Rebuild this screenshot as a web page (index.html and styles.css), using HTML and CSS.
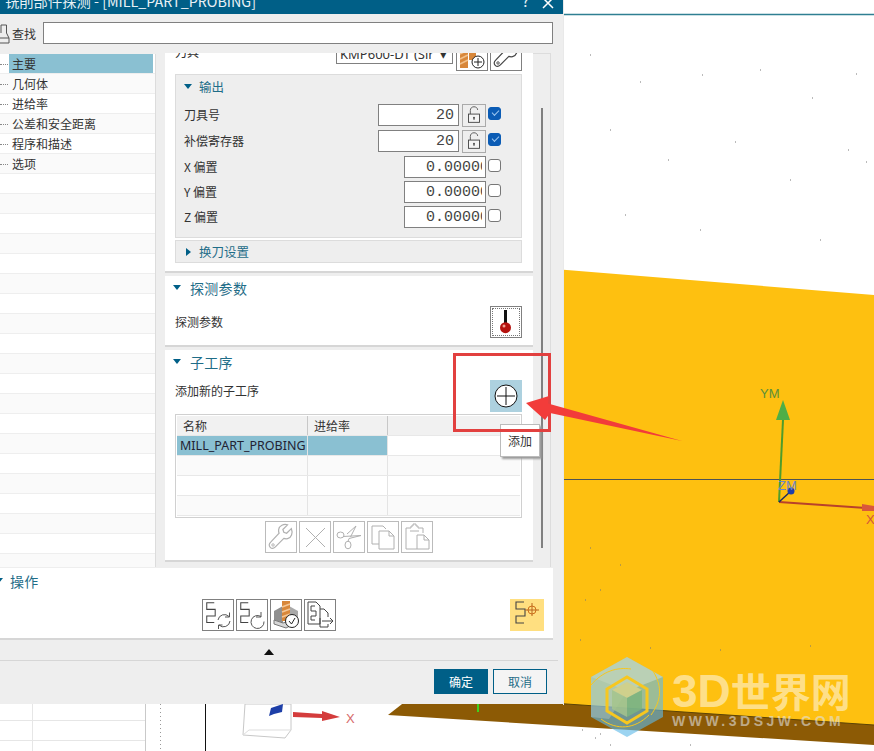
FILE: index.html
```html
<!DOCTYPE html>
<html lang="zh-CN">
<head>
  <meta charset="UTF-8" />
  <title>铣削部件探测</title>
  <link rel="stylesheet" href="styles.css">
</head>
<body>
  <svg class="hidden-defs" width="0" height="0">
    <symbol id="wrench" viewBox="0 0 32 32">
      <path d="M27 7l-5 5-3-1-1-3 5-5c-4-1.500-9 1-9.500 5-.2 1.500 0 3 .5 4L5 21.500c-2 2-2 4 -.5 5.500s3.500 1.500 5.500-.5L19 17.500c1 .4 2.500 .6 4 .3 4-.8 6-6 4-10.800z" fill="none" stroke="currentColor" stroke-width="1.300"/>
      <circle cx="7.500" cy="24.500" r="1.300" fill="none" stroke="currentColor"/>
    </symbol>
    <symbol id="lock" viewBox="0 0 24 24">
      <path d="M8 11V7c0-2.500 1.800-4 4-4s4 1.500 4 3.500" fill="none" stroke="#555" stroke-width="1"/>
      <rect x="6" y="11" width="12" height="9" fill="#f4f4f4" stroke="#444"/>
      <circle cx="12" cy="15" r="1" fill="#444"/>
      <path d="M12 15v2.500" stroke="#444"/>
    </symbol>
    <symbol id="seq" viewBox="0 0 32 32">
      <path d="M12 3H4V10H13V17H4V24H12" fill="none" stroke="#444" stroke-width="1.100"/>
    </symbol>
  </svg>

  <!-- 3D viewport behind the dialog -->
  <svg class="viewport" width="874" height="751" viewBox="0 0 874 751">
    <rect width="874" height="751" fill="#fff"/>
    <path d="M563 14.500H874" stroke="#2f7f92" stroke-width="1.500"/>
    <polygon points="388,715 420,690 874,700 874,745" fill="#8c5a05"/>
    <polygon points="430,259 874,295 874,725 420,694" fill="#fec010"/>
    <path d="M420 694L874 725" stroke="#5c4305" stroke-width="1"/>
    <path d="M563 479.500H874" stroke="#4e5355" stroke-width="1"/>
    <path d="M478 704v8" stroke="#3fd21f" stroke-width="2"/>
    <path d="M0 720.500H145M0 740.500H145M32.500 704V751" stroke="#e6e6e6"/>
    <path d="M145.500 704V751" stroke="#c9c9c9"/>
    <path d="M160.500 704V751" stroke="#999" stroke-dasharray="1 3"/>
    <path d="M205.500 704V751" stroke="#111"/>
    <polygon points="245,704 243,735 285,738 291,730 291,704" fill="none" stroke="#c8c8c8"/>
    <path d="M243 735L249 730H291" fill="none" stroke="#ddd"/>
    <path d="M269 716l2-8 12-4-1 8-8 2z" fill="#1e3fa8"/>
    <polygon points="293,712 322,714 322,711 340,717 322,721 322,718 293,717" fill="#d43c3c"/>
    <text class="axis-label" x="346" y="723" fill="#d66a6a">X</text>
    <path d="M779 502L783 420" stroke="#4f9c2c" stroke-width="2"/>
    <polygon points="783,400 790,420 776,420" fill="#4fae47"/>
    <text class="axis-label" x="760" y="398" fill="#5c8f3a">YM</text>
    <path d="M779 502L866 508" stroke="#b8412b" stroke-width="2"/>
    <polygon points="862,504 874,506 874,511 862,511" fill="#d9583c"/>
    <text class="axis-label" x="866" y="524" fill="#d4553a">X</text>
    <path d="M779 502L791 491" stroke="#1c2c60" stroke-width="1.500"/>
    <circle cx="791" cy="491" r="3.500" fill="#1e3fa8"/>
    <text class="axis-label" x="778" y="490" fill="#6f86c4">ZM</text>
    <path d="M590 55h1M640 82h1M702 75h1M760 70h1M812 98h1M856 74h1M610 130h1M668 160h1M735 142h1M790 180h1M848 150h1M866 162h1M700 230h1M625 215h1M820 240h1M580 640h1M650 648h1M720 650h1M810 646h1M582 730h1M595 738h1M600 734h1M690 745h1M610 745h1M585 600h1M600 590h1M620 565h1M590 548h1" stroke="#777"/>
    <path d="M563.500 0V705" stroke="#e9e9e9" stroke-width="1"/>
  </svg>

  <div class="dialog">
    <div class="title-bar">
      <span class="title-text">铣削部件探测 - [MILL_PART_PROBING]</span>
      <span class="title-help">?</span>
      <svg class="title-close" width="12" height="12" viewBox="0 0 12 12"><path d="M1 1L11 11M11 1L1 11" stroke="#fff" stroke-width="1.500"/></svg>
    </div>

    <div class="search-row">
      <svg class="search-icon" width="10" height="20" viewBox="0 0 10 20"><path d="M-1 19H9V14L6.500 9V1H1V9" fill="none" stroke="#555"/><path d="M-1 14H9" stroke="#555"/></svg>
      <span class="search-label">查找</span>
      <div class="search-input"></div>
    </div>

    <div class="main-row">
      <ul class="tree">
        <li class="tree-item active"><span class="tree-name">主要</span></li>
        <li class="tree-item"><span class="tree-name">几何体</span></li>
        <li class="tree-item"><span class="tree-name">进给率</span></li>
        <li class="tree-item"><span class="tree-name">公差和安全距离</span></li>
        <li class="tree-item"><span class="tree-name">程序和描述</span></li>
        <li class="tree-item"><span class="tree-name">选项</span></li>
      </ul>

      <div class="pane">
        <section class="panel panel-tool">
          <div class="tool-row">
            <span class="tool-label">刀具</span>
            <div class="tool-select">KMP600-DT (Sir&nbsp;&nbsp;▾</div>
            <button class="icon-btn">
              <svg width="30" height="30" viewBox="0 0 30 30">
                <rect x="3" y="8" width="8" height="20" fill="#d8873a"/>
                <path d="M3 14l8-4M3 19l8-4M3 24l8-4" stroke="#f2c08a" stroke-width="1.500"/>
                <rect x="12" y="8" width="7" height="12" fill="#d8873a"/>
                <circle cx="21" cy="22" r="6" fill="#fff" stroke="#222"/>
                <path d="M21 18v8M17 22h8" stroke="#222"/>
              </svg>
            </button>
            <button class="icon-btn"><svg class="wrench-dark" width="30" height="30"><use href="#wrench"/></svg></button>
          </div>

          <div class="group">
            <div class="group-head"><span class="tri-down"></span><span class="group-title">输出</span></div>
            <div class="field-row">
              <span class="field-label">刀具号</span>
              <div class="num-field wide"><span class="num-text">20</span></div>
              <button class="lock-btn"><svg width="22" height="22"><use href="#lock"/></svg></button>
              <span class="check on"></span>
            </div>
            <div class="field-row">
              <span class="field-label">补偿寄存器</span>
              <div class="num-field wide"><span class="num-text">20</span></div>
              <button class="lock-btn"><svg width="22" height="22"><use href="#lock"/></svg></button>
              <span class="check on"></span>
            </div>
            <div class="field-row">
              <span class="field-label">X 偏置</span>
              <div class="num-field"><span class="num-text clip">0.00000</span></div>
              <span class="check"></span>
            </div>
            <div class="field-row tight">
              <span class="field-label">Y 偏置</span>
              <div class="num-field"><span class="num-text clip">0.00000</span></div>
              <span class="check"></span>
            </div>
            <div class="field-row tight">
              <span class="field-label">Z 偏置</span>
              <div class="num-field"><span class="num-text clip">0.00000</span></div>
              <span class="check"></span>
            </div>
          </div>

          <div class="group group-closed">
            <span class="tri-right"></span><span class="group-title">换刀设置</span>
          </div>
        </section>

        <section class="panel panel-probe">
          <div class="panel-head"><span class="tri-down"></span><span class="panel-title">探测参数</span></div>
          <div class="action-row">
            <span class="action-label">探测参数</span>
            <button class="icon-btn probe-btn">
              <svg width="26" height="26" viewBox="0 0 26 26">
                <rect x="11" y="1" width="3" height="15" fill="#111"/>
                <circle cx="12.500" cy="18.700" r="5.500" fill="#b5120f"/>
                <circle cx="11" cy="17" r="1.500" fill="#f0a090"/>
              </svg>
            </button>
          </div>
        </section>

        <section class="panel panel-sub">
          <div class="panel-head"><span class="tri-down"></span><span class="panel-title">子工序</span></div>
          <div class="action-row add-row">
            <span class="action-label">添加新的子工序</span>
            <button class="add-btn">
              <svg width="24" height="24" viewBox="0 0 24 24"><circle cx="12" cy="12" r="11" fill="#fff" stroke="#111"/><path d="M12 3v18M3 12h18" stroke="#111"/></svg>
            </button>
          </div>
          <div class="sub-table">
            <div class="t-row t-head"><span class="t-cell">名称</span><span class="t-cell">进给率</span><span class="t-cell"></span></div>
            <div class="t-row t-sel"><span class="t-cell name">MILL_PART_PROBING</span><span class="t-cell"></span><span class="t-cell"></span></div>
            <div class="t-row t-alt"><span class="t-cell"></span><span class="t-cell"></span><span class="t-cell"></span></div>
            <div class="t-row"><span class="t-cell"></span><span class="t-cell"></span><span class="t-cell"></span></div>
            <div class="t-row t-alt"><span class="t-cell"></span><span class="t-cell"></span><span class="t-cell"></span></div>
          </div>
          <div class="gray-tools">
            <button class="gray-btn"><svg width="30" height="30"><use href="#wrench"/></svg></button>
            <button class="gray-btn"><svg width="30" height="30" viewBox="0 0 30 30"><path d="M6 6L25 25M25 6L6 25" stroke="currentColor"/></svg></button>
            <button class="gray-btn">
              <svg width="30" height="30" viewBox="0 0 30 30" fill="none" stroke="currentColor">
                <ellipse cx="6.500" cy="13" rx="3.500" ry="3"/><ellipse cx="14" cy="23" rx="3" ry="3.800"/>
                <path d="M9 14.500L27 13.500 15 16.500 14 19.500M13 12L22 4 16.500 15"/>
              </svg>
            </button>
            <button class="gray-btn">
              <svg width="30" height="30" viewBox="0 0 30 30" fill="none" stroke="currentColor">
                <path d="M11 22H4V4H15L18 7"/><path d="M11 9H21L26 14V27H11Z"/><path d="M21 9V14H26"/>
              </svg>
            </button>
            <button class="gray-btn">
              <svg width="30" height="30" viewBox="0 0 30 30" fill="none" stroke="currentColor">
                <path d="M15 27H4V6H9V4H11V2H14V4H16V6H21V11"/><path d="M15 13H22L27 18V27H15Z"/><path d="M22 13V18H27"/><path d="M8 9H17"/>
              </svg>
            </button>
          </div>
        </section>
      </div>

      <div class="scroll-gutter"><div class="scroll-thumb"></div></div>
    </div>

    <section class="ops">
      <div class="ops-head"><span class="tri-down cut"></span><span class="panel-title">操作</span></div>
      <div class="ops-row">
        <button class="icon-btn op-btn">
          <svg width="30" height="30" viewBox="0 0 30 30">
            <use href="#seq" width="30" height="30"/>
            <path d="M15 20a6.500 6.500 0 0 1 11-3.500M27 21a6.500 6.500 0 0 1-11 4M26.500 12.500v4.500h-4.500M15.500 29v-4h4" fill="none" stroke="#555"/>
          </svg>
        </button>
        <button class="icon-btn op-btn">
          <svg width="30" height="30" viewBox="0 0 30 30">
            <use href="#seq" width="30" height="30"/>
            <path d="M24 16.500a6.500 6.500 0 1 0 3 5M24 12v5h-5" fill="none" stroke="#555"/>
          </svg>
        </button>
        <button class="icon-btn op-btn">
          <svg width="30" height="30" viewBox="0 0 30 30">
            <path d="M3 11L12 6V23L3 20Z" fill="#8f8f8f"/><path d="M18 6L27 11V18L18 23Z" fill="#a9a9a9"/>
            <path d="M3 20L12 23 22 20 27 22 15 28 3 24Z" fill="#d6d6d6" stroke="#777"/>
            <rect x="11" y="1" width="8" height="20" fill="#d8873a"/>
            <path d="M11 7l8-3M11 12l8-3M11 17l8-3" stroke="#f4c797" stroke-width="1.500"/>
            <circle cx="21" cy="21" r="6.500" fill="#fff" stroke="#222"/>
            <path d="M18 21l2.500 3 3.500-6" fill="none" stroke="#222"/>
          </svg>
        </button>
        <button class="icon-btn op-btn">
          <svg width="30" height="30" viewBox="0 0 30 30" fill="none" stroke="#444">
            <path d="M3 2H11L15 6V24H3Z"/><path d="M10 6H6V11H11V16H6V20H10"/><path d="M15 9H19L23 13V17M23 24V27H15V18"/><path d="M17 21H28M25 18L28 21 25 24"/>
          </svg>
        </button>
        <button class="yellow-btn">
          <svg width="32" height="32" viewBox="0 0 32 32">
            <use href="#seq" x="1" width="32" height="32"/>
            <circle cx="21" cy="11" r="4" fill="none" stroke="#d0701a"/>
            <path d="M21 4v13M14 11h14" stroke="#b8651c"/>
          </svg>
        </button>
      </div>
    </section>

    <div class="collapse-bar"><span class="tri-up"></span></div>

    <div class="footer">
      <button class="btn-ok">确定</button>
      <button class="btn-cancel">取消</button>
    </div>
  </div>

  <!-- tooltip and screenshot annotation lie over the dialog -->
  <div class="tooltip">添加</div>
  <svg class="annotation" width="874" height="751" viewBox="0 0 874 751">
    <rect x="454.500" y="354.500" width="95" height="76" fill="none" stroke="#e2403f" stroke-width="3"/>
    <polygon points="526,403 549,396 548,403.500 682,441 550,413 545,420" fill="#f23c3a"/>
  </svg>

  <div class="watermark">
    <svg class="wm-logo" width="72" height="80" viewBox="0 0 72 80">
      <polygon points="36,0 72,20 72,60 36,80 0,60 0,20" fill="#5fb9e8" fill-opacity=".62"/>
      <polygon points="36,0 72,20 36,34 0,20" fill="#fff" fill-opacity=".3"/>
      <polygon points="0,20 36,34 18,62 0,60" fill="#fff" fill-opacity=".2"/>
      <path d="M0 28C12 14 26 10 40 12M62 14C72 30 70 44 60 58M10 62C26 74 44 72 58 58" fill="none" stroke="#f7c71f" stroke-width="1"/>
      <polygon points="36,20 56,32 56,54 36,66 16,54 16,32" fill="none" stroke="#f7c71f" stroke-width="3"/>
      <polygon points="36,25 51,33 36,41 21,33" fill="#cfd08c"/>
      <polygon points="21,33 36,41 36,60 21,52" fill="#a4c48c" fill-opacity=".85"/>
      <polygon points="51,33 36,41 36,60 51,52" fill="#7cb47e" fill-opacity=".85"/>
    </svg>
    <div class="wm-text">
      <div class="wm-name"><span class="wm-latin">3D</span>世界网</div>
      <div class="wm-url">WWW.3DSJW.COM</div>
    </div>
  </div>
</body>
</html>
```
FILE: styles.css
```css
* {
  margin: 0;
  padding: 0;
  box-sizing: border-box;
}
html, body {
  width: 874px;
  height: 751px;
  overflow: hidden;
}
body {
  position: relative;
  background: #fff;
  color: #333;
  font-family: "Noto Sans CJK SC", "Noto Sans", sans-serif;
  font-size: 12px;
}
button {
  font: inherit;
  background: none;
  display: flex;
  align-items: center;
  justify-content: center;
}
ul {
  list-style: none;
}
.hidden-defs {
  position: absolute;
}
.viewport,
.annotation {
  position: absolute;
  left: 0;
  top: 0;
}
.annotation {
  pointer-events: none;
}
.axis-label {
  font-family: "Liberation Sans", sans-serif;
  font-size: 13px;
}

/* dialog */
.dialog {
  position: absolute;
  left: 0;
  top: 0;
  width: 563px;
  height: 704px;
  background: #eeeeee;
  display: flex;
  flex-direction: column;
  overflow: hidden;
}
.title-bar {
  height: 14px;
  flex: none;
  background: #005f87;
  color: #e8f1f5;
  display: flex;
  align-items: flex-end;
  overflow: hidden;
  padding: 0 9px 3px 5px;
}
.title-text {
  font-size: 14.300px;
  line-height: 20px;
  flex: 1;
  white-space: nowrap;
}
.title-help {
  font-size: 15px;
  line-height: 20px;
  margin-right: 13px;
}
.title-close {
  margin-bottom: 2px;
}
.search-row {
  height: 38px;
  flex: none;
  display: flex;
  align-items: center;
  padding: 8px 10px 8px 0;
}
.search-icon {
  flex: none;
  margin-top: 2px;
}
.search-label {
  margin-left: 2px;
  width: 31px;
}
.search-input {
  flex: 1;
  height: 22px;
  background: #fff;
  border: 1px solid #808080;
}
.main-row {
  height: 515px;
  flex: none;
  display: flex;
}
.tree {
  width: 156px;
  margin-top: 2px;
  flex: none;
  border-right: 1px solid #dcdcdc;
  background: repeating-linear-gradient(#ffffff 0, #ffffff 19px, #eeeeee 19px, #eeeeee 20px, #fafafa 20px, #fafafa 39px, #eeeeee 39px, #eeeeee 40px);
}
.tree-item {
  height: 20px;
  line-height: 20px;
  padding-left: 9px;
  position: relative;
}
.tree-item::before {
  content: "";
  position: absolute;
  left: 0;
  top: 10px;
  width: 8px;
  border-top: 1px dotted #888;
}
.tree-name {
  display: block;
  padding-left: 3px;
  height: 19px;
  line-height: 19px;
  margin-right: 2px;
}
.tree-item.active .tree-name {
  background: #8ac0d2;
}
.pane {
  width: 368px;
  margin-left: 9px;
  margin-top: 1px;
  overflow: hidden;
  flex: none;
  display: flex;
  flex-direction: column;
  gap: 3px;
}
.scroll-gutter {
  width: 18px;
  margin-top: 1px;
  flex: none;
  border-top: 1px solid #dcdcdc;
  border-right: 1px solid #dcdcdc;
  padding: 54px 0 0 8px;
}
.scroll-thumb {
  width: 2px;
  height: 440px;
  background: #808080;
}
.panel {
  background: #fff;
  padding: 0 11px 0 10px;
  border-bottom: 2px solid #d6d6d6;
  flex: none;
}
.panel-tool {
  height: 220px;
}
.panel-probe {
  height: 71px;
}
.panel-sub {
  height: 212px;
}
.tool-row {
  height: 32px;
  margin-top: -14px;
  display: flex;
  justify-content: flex-end;
  gap: 2px;
}
.tool-label {
  margin-right: auto;
  align-self: flex-end;
  line-height: 14px;
  margin-bottom: 12px;
}
.tool-select {
  width: 117px;
  height: 25px;
  border: 1px solid #808080;
  padding: 6px 0 0 3px;
  line-height: 16px;
  font-family: "Noto Sans", sans-serif;
  font-size: 13px;
  white-space: nowrap;
  overflow: hidden;
  margin-right: 1px;
}
.icon-btn {
  width: 32px;
  height: 32px;
  border: 1px solid #808080;
  background: #fff;
  flex: none;
}
.wrench-dark {
  color: #444;
}
.group {
  margin-top: 3px;
  height: 164px;
  background: #eeeeee;
  border: 1px solid #dcdcdc;
}
.group-head {
  height: 22px;
  display: flex;
  align-items: center;
  padding-left: 8px;
}
.group-title {
  color: #1f6d88;
  font-size: 12.500px;
  margin-left: 7px;
}
.group-closed {
  margin-top: 2px;
  height: 23px;
  display: flex;
  align-items: center;
  padding-left: 10px;
}
.group-closed .group-title {
  margin-left: 8px;
}
.tri-down {
  width: 0;
  height: 0;
  border-left: 4px solid transparent;
  border-right: 4px solid transparent;
  border-top: 5px solid #005f87;
  flex: none;
}
.tri-down.cut {
  margin-left: -5px;
}
.tri-right {
  width: 0;
  height: 0;
  border-top: 4px solid transparent;
  border-bottom: 4px solid transparent;
  border-left: 5px solid #005f87;
  flex: none;
}
.tri-up {
  width: 0;
  height: 0;
  border-left: 5px solid transparent;
  border-right: 5px solid transparent;
  border-bottom: 6px solid #111;
}
.field-row {
  height: 22px;
  display: flex;
  align-items: center;
  justify-content: flex-end;
  margin-top: 4px;
  padding: 0 20px 0 8px;
}
.field-row:nth-child(2) {
  margin-top: 7px;
}
.field-row.tight {
  margin-top: 3px;
}
.field-label {
  margin-right: auto;
  color: #333;
  padding-bottom: 1px;
}
.num-field {
  width: 82px;
  height: 22px;
  background: #fff;
  border: 1px solid #808080;
  display: flex;
  justify-content: flex-end;
  align-items: center;
  padding-right: 3px;
  font-family: "Liberation Mono", monospace;
  font-size: 15px;
  color: #444;
}
.num-field.wide {
  width: 81px;
}
.num-text {
  padding-right: 1px;
}
.num-text.clip {
  width: 56px;
  overflow: hidden;
  white-space: nowrap;
  padding-right: 0;
}
.lock-btn {
  width: 24px;
  height: 23px;
  border: 1px solid #aaa;
  background: #eeeeee;
  margin-left: 3px;
  flex: none;
}
.check {
  width: 13px;
  height: 13px;
  margin-left: 2px;
  margin-top: -3px;
  border: 1px solid #777;
  border-radius: 3px;
  background: #fff;
  position: relative;
  flex: none;
}
.check.on {
  background: #0b5cb5;
  border-color: #0b5cb5;
}
.check.on::after {
  content: "";
  position: absolute;
  left: 3px;
  top: 2px;
  width: 6px;
  height: 3px;
  border-left: 1px solid #9cc6f0;
  border-bottom: 1px solid #9cc6f0;
  transform: rotate(-45deg);
}
.panel-head {
  height: 25px;
  padding-bottom: 2px;
  display: flex;
  align-items: center;
  margin-left: -2px;
}
.panel-title {
  color: #1f6d88;
  font-size: 14px;
  margin-left: 9px;
  letter-spacing: .3px;
}
.action-row {
  height: 32px;
  margin-top: 5px;
  display: flex;
  align-items: center;
  justify-content: space-between;
}
.panel-probe .action-label {
  padding-bottom: 2px;
}
.add-row .action-label {
  padding-bottom: 12px;
}
.probe-btn {
  outline: 1px dotted #777;
  outline-offset: -3px;
}
.add-btn {
  width: 32px;
  height: 32px;
  border: 0;
  background: #add1df;
}
.sub-table {
  margin-top: 2px;
  height: 104px;
  border: 1px solid #d0d0d0;
  padding: 1px;
}
.t-row {
  display: grid;
  grid-template-columns: 131px 80px 1fr;
  height: 20px;
  border-bottom: 1px solid #e8e8e8;
}
.t-cell {
  border-right: 1px solid #e4e4e4;
  padding-left: 6px;
  line-height: 19px;
  white-space: nowrap;
  overflow: hidden;
}
.t-cell:last-child {
  border-right: 0;
}
.t-head {
  background: #f1f1f1;
}
.t-head .t-cell {
  border-right-color: #c8c8c8;
}
.t-sel .t-cell:nth-child(-n+2) {
  background: #8ac0d2;
}
.t-sel .name {
  font-family: "Noto Sans", sans-serif;
  font-size: 12.500px;
  padding-left: 3px;
  color: #223;
}
.t-alt {
  background: #fafafa;
}
.gray-tools {
  margin-top: 3px;
  display: flex;
  justify-content: center;
  gap: 2px;
}
.gray-btn {
  width: 32px;
  height: 32px;
  border: 1px solid #bbbbbb;
  background: #fff;
  color: #b0b0b0;
}

/* bottom of the dialog */
.ops {
  width: 553px;
  height: 72px;
  flex: none;
  background: #fff;
  border-bottom: 2px solid #d6d6d6;
  margin-top: 1px;
}
.ops-head {
  height: 25px;
  display: flex;
  align-items: center;
}
.ops-head .panel-title {
  margin-left: 7px;
}
.ops-row {
  margin-top: 6px;
  display: flex;
  gap: 2px;
  padding: 0 9px 0 202px;
}
.op-btn {
  background: #fff;
}
.yellow-btn {
  width: 34px;
  height: 32px;
  margin-left: auto;
  border: 0;
  background: #ffdf80;
}
.collapse-bar {
  height: 21px;
  flex: none;
  width: 558px;
  border-bottom: 1px solid #d6d6d6;
  display: flex;
  align-items: center;
  justify-content: center;
  padding: 4px 20px 0 0;
}
.footer {
  flex: 1;
  display: flex;
  justify-content: flex-end;
  gap: 5px;
  padding: 8px 16px 0 0;
}
.btn-ok,
.btn-cancel {
  width: 54px;
  height: 25px;
  border: 1px solid #005f87;
}
.btn-ok {
  background: #005f87;
  color: #fff;
}
.btn-cancel {
  background: #f4f4f4;
  color: #1f6d88;
}

.tooltip {
  position: absolute;
  left: 500px;
  top: 424px;
  width: 40px;
  height: 33px;
  background: #fff;
  border: 1px solid #bbb;
  box-shadow: 2px 2px 2px #999;
  line-height: 31px;
  padding-left: 7px;
}

.watermark {
  position: absolute;
  left: 591px;
  top: 657px;
  display: flex;
  gap: 9px;
}
.wm-name {
  font-size: 40px;
  font-weight: 700;
  line-height: 44px;
  margin-top: 11px;
  color: rgba(255, 232, 170, .8);
  white-space: nowrap;
}
.wm-latin {
  font-family: "Liberation Sans", sans-serif;
  font-size: 46px;
}
.wm-url {
  font-family: "Liberation Sans", sans-serif;
  font-size: 14px;
  font-weight: 700;
  letter-spacing: 3.500px;
  line-height: 16px;
  color: rgba(225, 225, 225, .6);
  white-space: nowrap;
}
```
